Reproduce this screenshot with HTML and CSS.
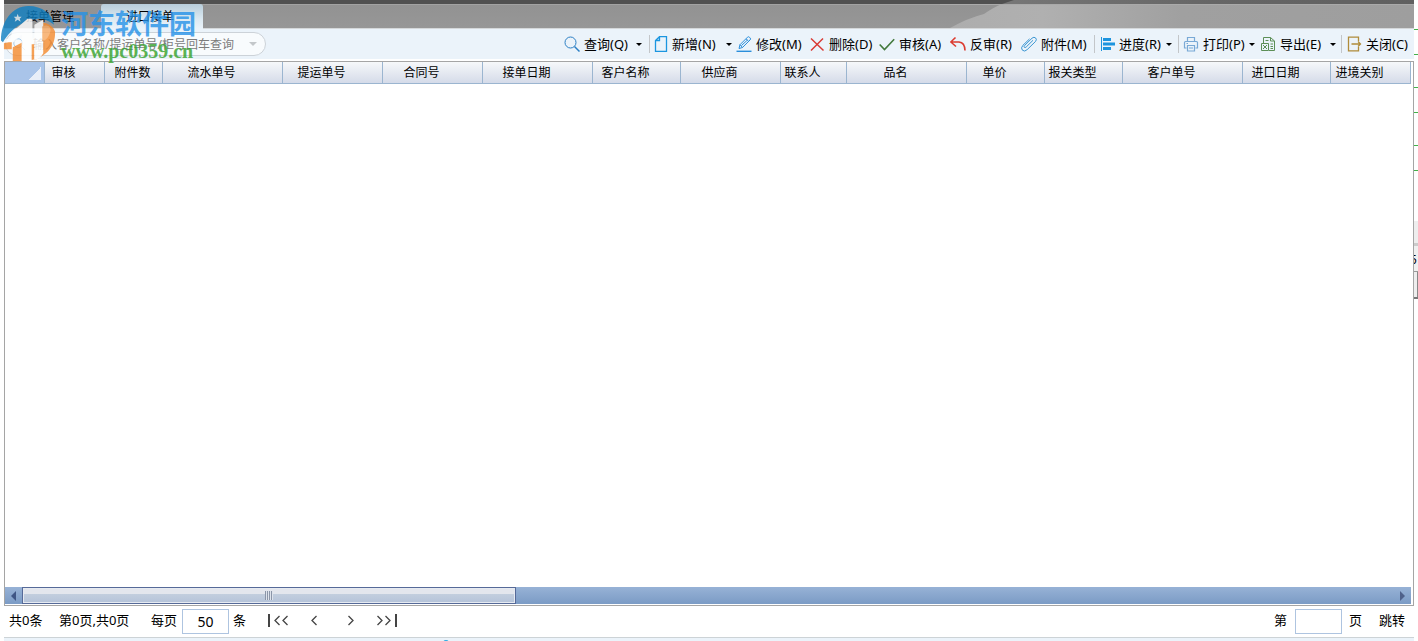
FILE: index.html
```html
<!DOCTYPE html>
<html lang="zh-CN">
<head>
<meta charset="utf-8">
<title>进口接单</title>
<link rel="stylesheet" href="styles.css">
</head>
<body>
<div class="app">
  <header class="titlebar">
    <svg class="shine" viewBox="0 0 474 28" preserveAspectRatio="none" aria-hidden="true">
      <defs>
        <linearGradient id="sh" x1="0" x2="1" y1="0" y2="0"><stop offset="0" stop-color="#adadad"/><stop offset=".2" stop-color="#b0b0b0"/><stop offset=".5" stop-color="#a0a0a0"/><stop offset="1" stop-color="#9e9e9e"/></linearGradient>
        <linearGradient id="st" x1="0" x2="1" y1="0" y2="0"><stop offset="0" stop-color="#777"/><stop offset=".5" stop-color="#666"/><stop offset="1" stop-color="#606060"/></linearGradient>
      </defs>
      <path d="M10 28 Q28 18 44 14 Q54 7 62 4 H474 V28Z" fill="url(#sh)"/>
      <path d="M62 4 L74 0 H474 V4Z" fill="url(#st)"/>
      <path d="M0 4.5H474" stroke="#aaa"/>
    </svg>
    <nav class="tabs">
      <a class="tab" href="#manage">接单管理</a>
      <a class="tab tab-active" href="#import">进口接单</a>
    </nav>
  </header>

  <div class="toolbar">
    <div class="search">
      <svg class="search-icon" viewBox="0 0 16 16" aria-hidden="true"><circle cx="7" cy="7" r="5"/><path d="M11 11l4 4"/></svg>
      <input class="search-input" type="text" aria-label="查询" placeholder="输入客户名称/提运单号/柜号回车查询">
      <button class="search-drop" aria-label="选择"><span class="caret caret-pale"></span></button>
    </div>
    <div class="tools">
      <div class="group w-query sep">
        <button class="tool"><svg class="icon" viewBox="0 0 16 16" stroke="#2b7fc4"><circle cx="6.5" cy="6.5" r="5.5"/><path d="M10.5 10.5L15.5 15.5" stroke-width="1.5"/></svg>查询(Q)</button>
        <button class="drop" aria-label="查询选项"><span class="caret"></span></button>
      </div>
      <div class="group w-add">
        <button class="tool"><svg class="icon" viewBox="0 0 16 16" stroke="#1b96e0"><path d="M7.5 .7H14.5V15.3H3.5V4.5ZM7.5 .7V4.5H3.5" stroke-width="1.3"/></svg>新增(N)</button>
        <button class="drop" aria-label="新增选项"><span class="caret"></span></button>
      </div>
      <div class="group w-edit">
        <button class="tool"><svg class="icon" viewBox="0 0 16 16" stroke="#2a8edb"><path d="M3 12.5L4 8.7 11.5 1.2Q12.5 .2 13.5 1.3L14.3 2.1Q15 3 14 4L6.5 11.5ZM4 8.7L6.5 11.5M10 2.8L12.8 5.5M5.5 9.5L11.5 4"/><path d="M.5 15.3H15.5" stroke-width="1.4"/></svg>修改(M)</button>
      </div>
      <div class="group w-del">
        <button class="tool"><svg class="icon" viewBox="0 0 16 16" stroke="#d93a34"><path d="M2 2.5L14.5 14.5M14 2.5L2 14.5" stroke-width="1.5"/></svg>删除(D)</button>
      </div>
      <div class="group w-act">
        <button class="tool"><svg class="icon" viewBox="0 0 16 16" stroke="#43793c"><path d="M.7 8.5L5.5 13.5 15.2 3.2" stroke-width="1.6"/></svg>审核(A)</button>
      </div>
      <div class="group w-act">
        <button class="tool"><svg class="icon" viewBox="0 0 16 16" stroke="#dc3b30"><path d="M5.5 1.5L.8 6 6 10.5M1 6H9Q14.8 6.5 15 14.5" stroke-width="1.6"/></svg>反审(R)</button>
      </div>
      <div class="group w-file sep">
        <button class="tool"><svg class="icon" viewBox="0 0 16 16" stroke="#3b96d2"><path d="M12 4.3L5.2 11Q4 12 3.3 11.3 2.6 10.5 3.7 9.4L11 2.2Q13 .4 14.7 2 16.2 3.7 14.4 5.6L6.2 13.6Q3.600 16.200 1.400 14.200-.6 12 1.900 9.300L8.500 2.900"/></svg>附件(M)</button>
      </div>
      <div class="group w-prog sep">
        <button class="tool"><svg class="icon" viewBox="0 0 16 16" stroke="#1c94de"><path d="M2.500 1V15"/><path d="M4 3.500H12M4 8H16M4 12.500H12" stroke-width="3"/></svg>进度(R)</button>
        <button class="drop" aria-label="进度选项"><span class="caret"></span></button>
      </div>
      <div class="group w-print">
        <button class="tool"><svg class="icon" viewBox="0 0 16 16" stroke="#79a9d6"><path d="M4.500 5V1.500H11.500V5M3.500 12H1.500V6.500Q1.500 5.500 2.500 5.500H13.500Q14.500 5.500 14.500 6.500V12H12.500M4.500 9.500H11.500V15H4.500ZM3.500 7.500H5M6 12H10" stroke-width="1.200"/></svg>打印(P)</button>
        <button class="drop" aria-label="打印选项"><span class="caret"></span></button>
      </div>
      <div class="group w-export sep">
        <button class="tool"><svg class="icon" viewBox="0 0 16 16" stroke="#5c8f56"><path d="M3.500 7V1.500H10.500L14.500 5V14.500H9M10.500 1.500V5H14.500M1.500 7.500H8.500V14.500H1.500ZM3 9L7 13M7 9L3 13M10.500 8H13M10.500 10.500H13M10.500 12.500H13M5.500 4.500H8.500"/></svg>导出(E)</button>
        <button class="drop" aria-label="导出选项"><span class="caret"></span></button>
      </div>
      <div class="group w-close">
        <button class="tool"><svg class="icon" viewBox="0 0 16 16" stroke="#b08c3a"><path d="M12.500 5V1.200H2.500V14.800H12.500V11M5.500 8H14.500M12 5.500L14.500 8 12 10.500" stroke-width="1.300"/></svg>关闭(C)</button>
      </div>
    </div>
  </div>

  <main class="grid">
    <div class="grid-body">
      <table class="table">
        <colgroup><col class="c40"><col class="c60"><col class="c58"><col class="c120"><col class="c100"><col class="c100"><col class="c110"><col class="c88"><col class="c100"><col class="c66"><col class="c120"><col class="c78"><col class="c78"><col class="c120"><col class="c88"><col class="c80"></colgroup>
        <thead><tr>
          <th class="corner" aria-label="全选"></th><th>审核</th><th class="tight">附件数</th><th>流水单号</th><th>提运单号</th><th>合同号</th><th>接单日期</th><th>客户名称</th><th>供应商</th><th>联系人</th><th>品名</th><th>单价</th><th>报关类型</th><th>客户单号</th><th>进口日期</th><th>进境关别</th>
        </tr></thead>
      </table>
    </div>
    <div class="scrollbar">
      <button class="arrow arrow-left" aria-label="向左"></button>
      <div class="track"><div class="thumb"><span class="grip"></span></div></div>
      <button class="arrow arrow-right" aria-label="向右"></button>
    </div>
  </main>

  <footer class="pager">
    <span class="total">共0条</span>
    <span class="pages">第0页,共0页</span>
    <label class="field" for="size">每页</label>
    <input class="num" id="size" type="text" value="50">
    <span class="unit">条</span>
    <div class="nav">
      <button class="step" aria-label="首页"><svg width="22" height="14" viewBox="0 0 22 14"><path d="M2 1V14" stroke-width="2"/><path d="M12.500 3L8 7.500 12.500 12M20.500 3L16 7.500 20.500 12"/></svg></button>
      <button class="step" aria-label="上一页"><svg width="10" height="14" viewBox="0 0 10 14"><path d="M7.500 3L3 7.500 7.500 12"/></svg></button>
      <button class="step" aria-label="下一页"><svg width="10" height="14" viewBox="0 0 10 14"><path d="M2.500 3L7 7.500 2.500 12"/></svg></button>
      <button class="step" aria-label="末页"><svg width="22" height="14" viewBox="0 0 22 14"><path d="M20 1V14" stroke-width="2"/><path d="M1.500 3L6 7.500 1.500 12M9.500 3L14 7.500 9.500 12"/></svg></button>
    </div>
    <label class="field goto" for="page">第</label>
    <input class="num" id="page" type="text">
    <span class="unit">页</span>
    <button class="jump">跳转</button>
  </footer>
  <div class="status"><span class="dot"></span></div>
</div>

<aside class="edge" aria-hidden="true"><div class="edge-panel"></div><div class="edge-cell">5</div><div class="edge-box"></div></aside>

<div class="mark">
  <svg class="mark-logo" viewBox="0 0 58 58" aria-hidden="true">
    <path d="M43 18C48 18 54 21 56 27C57 42 46 56 25 57H13V43L23 38V56H32V38H35V56C39 55 42 52 43 49ZM4 39L12 37V45H4Z" fill="#f58a2c"/>
    <path d="M1 36C1 17 12 1 29 1C43 1 53 9 55 20C47 14 41 13 33 15C20 18 9 27 3 38Z" fill="#0f7fc2"/>
    <path d="M11 34L12 28L28 14H33V34H35V20L44 15V49C42 53 39 55 35 56V40H32V57H22V30L14 38H4L5 35Z" fill="#fff"/>
    <path d="M43 22C48 19 53 22 51 28C49 34 46 36 43 37Z" fill="#f9a85f"/>
    <path d="M18 9l1 3 3 0-2 2 1 3-3-2-3 2 1-3-2-2h3z" fill="#d8eaf5"/>
  </svg>
  <div class="mark-text"><div class="mark-name">河东软件园</div><div class="mark-url">www.pc0359.cn</div></div>
</div>
</body>
</html>
```

FILE: styles.css
```css
* { box-sizing: border-box; }
body {
  margin: 0;
  height: 100vh;
  display: flex;
  overflow: hidden;
  background: #fff;
  color: #000;
  font: 12px/16px "Noto Sans", "Noto Sans CJK SC", sans-serif;
}
button, input { font: inherit; color: inherit; }
button { padding: 0; border: 0; background: none; }
svg { fill: none; display: block; }

.app { flex: 1; min-width: 0; margin-left: 4px; display: flex; flex-direction: column; }

.titlebar {
  position: relative;
  height: 29px;
  padding-top: 4px;
  border-bottom: 1px solid #d5d8da;
  background: linear-gradient(#505050 4px, #a2a2a2 4px, #a2a2a2 5px, #929292 5px, #979797);
}
.shine { position: absolute; right: 0; top: 0; width: 474px; height: 28px; }
.tabs { display: flex; height: 25px; }
.tab { width: 97px; padding-left: 22px; line-height: 25px; color: #000; text-decoration: none; }
.tab-active {
  width: 102px;
  padding-left: 25px;
  border-radius: 3px 3px 0 0;
  background: linear-gradient(#b7cddb, #dce9f1 60%, #ebf3fa);
}

.toolbar { height: 30px; display: flex; align-items: center; padding: 0 7px 0 1px; background: #ebf3fa; }
.search {
  display: flex;
  align-items: center;
  width: 261px;
  height: 24px;
  padding: 0 8px 0 6px;
  border: 1px solid #ccd2d8;
  border-radius: 12px;
  background: #f8fbfd;
}
.search-icon { width: 14px; height: 14px; stroke: #9cc4e4; }
.search-input { flex: 1; min-width: 0; margin-left: 7px; padding: 1px 0 0; border: 0; background: none; outline: 0; }
.search-input::placeholder { color: #7d7d7d; opacity: 1; }
.search-drop { width: 8px; }
.caret { display: block; border: 3px solid transparent; border-top-color: #000; border-bottom: 0; }
.caret-pale { border-width: 4px; border-bottom: 0; border-top-color: #c3c7ca; }

.tools { display: flex; margin-left: auto; font-size: 13px; height: 18px; }
.group { position: relative; display: flex; align-items: center; flex: none; }
.sep { border-right: 1px solid #c3c6c9; }
.tool { display: flex; align-items: center; gap: 4px; white-space: nowrap; }
.icon { width: 16px; height: 16px; flex: none; }
.drop { margin-left: auto; }
.w-query { width: 86px; padding-right: 7px; margin-right: 2px; }
.w-add { width: 80px; margin-right: 4px; }
.w-edit { width: 73px; }
.w-del { width: 70px; }
.w-act { width: 71px; }
.w-file { width: 74px; margin-right: 4px; }
.w-prog { width: 80px; padding-right: 6px; margin-right: 4px; }
.w-print { width: 72px; margin-right: 5px; }
.w-export { width: 82px; padding-right: 5px; margin-right: 4px; }
.w-close { width: 61px; }

.grid {
  flex: 1;
  min-height: 0;
  margin-top: 2px;
  display: flex;
  flex-direction: column;
  border: 1px solid #a5a5a5;
}
.grid-body { flex: 1; min-height: 0; overflow: hidden; }
.table { width: 1406px; table-layout: fixed; border-collapse: separate; border-spacing: 0; }
.table th {
  height: 22px;
  padding: 1px 22px 0 0;
  border-right: 1px solid #9bb5d0;
  border-bottom: 1px solid #9bb5d0;
  background: linear-gradient(#f6f8fa, #d5dbe9);
  font-weight: 400;
  text-align: center;
  white-space: nowrap;
}
.table .tight { padding-right: 2px; }
.table .corner { background: linear-gradient(135deg, transparent 50%, #e8eef8 50%) right 3px bottom 3px / 13px 13px no-repeat, #a9c4e9; }
.c40 { width: 40px; } .c58 { width: 58px; } .c60 { width: 60px; } .c66 { width: 66px; }
.c78 { width: 78px; } .c80 { width: 80px; } .c88 { width: 88px; } .c100 { width: 100px; }
.c110 { width: 110px; } .c120 { width: 120px; }

.scrollbar { display: flex; height: 17px; margin: 0 2px 1px 0; background: linear-gradient(#97b2d6, #7b9bc5); }
.arrow { width: 17px; display: flex; align-items: center; justify-content: center; }
.arrow::before { content: ""; border: 5px solid transparent; }
.arrow-left::before { border-right-color: #3f5685; border-left: 0; }
.arrow-right::before { border-left-color: #4f618a; border-right: 0; }
.track { flex: 1; }
.thumb {
  width: 36%;
  height: 17px;
  display: flex;
  align-items: center;
  justify-content: center;
  border: 1px solid #566a98;
  background: linear-gradient(#e3e6ed 6px, #c2cede 6px, #b5c3d9);
  box-shadow: inset 0 0 0 1px #e6eaf1;
}
.grip { width: 8px; height: 9px; background: repeating-linear-gradient(90deg, #8b95a8 0 1px, #dde3ec 1px 2px); }

.pager { display: flex; align-items: flex-start; height: 31px; padding: 3px 9px 0 5px; font-size: 13px; line-height: 22px; }
.total { width: 50px; }
.pages { width: 92px; }
.field { width: 31px; }
.num { width: 47px; height: 25px; padding: 0; border: 1px solid #aec4e0; background: #fff; text-align: center; font-size: 14px; }
.unit { margin-left: 4px; }
.nav { display: flex; align-items: center; height: 22px; margin-left: 21px; }
.step { margin-right: 20px; }
.step:nth-child(2) { margin-right: 27px; }
.step svg { stroke: #444; stroke-width: 1.3; }
.goto { width: 21px; margin-left: auto; }
.goto ~ .unit { margin-left: 7px; }
.jump { margin-left: 17px; }
.status { height: 4px; border-top: 1px solid #cdd3d6; background: #ebf3fa; overflow: hidden; }
.dot { display: block; width: 6px; height: 6px; margin: 2px 0 0 439px; border-radius: 3px; background: #29aae1; }

.edge {
  width: 4px;
  overflow: hidden;
  background:
    linear-gradient(#43b04a, #43b04a) 0 29px / 4px 1px no-repeat,
    linear-gradient(#43b04a, #43b04a) 0 54px / 4px 1px no-repeat,
    linear-gradient(#43b04a, #43b04a) 0 87px / 4px 1px no-repeat,
    linear-gradient(#43b04a, #43b04a) 0 112px / 4px 1px no-repeat,
    linear-gradient(#43b04a, #43b04a) 0 145px / 4px 1px no-repeat,
    linear-gradient(#43b04a, #43b04a) 0 170px / 4px 1px no-repeat;
}
.edge-panel { height: 25px; margin-top: 221px; background: #eee; border-bottom: 3px solid #ccc; }
.edge-cell { height: 26px; line-height: 28px; background: #f0f0f0; border-bottom: 1px solid #999; text-indent: -4px; }
.edge-box { height: 27px; background: linear-gradient(90deg, #eee 3px, #888 3px); border-bottom: 2px solid #777; }

.mark { position: absolute; left: 0; top: 5px; display: flex; opacity: .8; pointer-events: none; }
.mark-logo { width: 57px; height: 57px; }
.mark-text { margin-left: 4px; }
.mark-name { font: 700 27px/36px "Noto Sans CJK SC", sans-serif; color: #2592e8; }
.mark-url { font: 700 20px/20px "Liberation Serif", serif; color: #35a22c; }
```
